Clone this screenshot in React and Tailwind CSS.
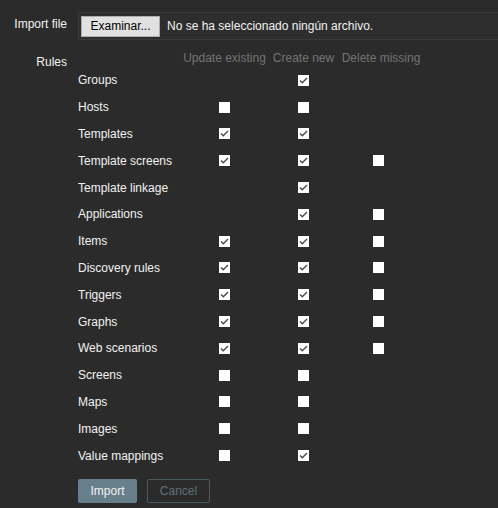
import React from 'react';

const rules = [
  ['Groups', null, true, null],
  ['Hosts', false, false, null],
  ['Templates', true, true, null],
  ['Template screens', true, true, false],
  ['Template linkage', null, true, null],
  ['Applications', null, true, false],
  ['Items', true, true, false],
  ['Discovery rules', true, true, false],
  ['Triggers', true, true, false],
  ['Graphs', true, true, false],
  ['Web scenarios', true, true, false],
  ['Screens', false, false, null],
  ['Maps', false, false, null],
  ['Images', false, false, null],
  ['Value mappings', false, true, null],
];

function Check({ checked }) {
  return (
    <span className="block w-[11px] h-[11px] bg-white">
      {checked && (
        <svg width="11" height="11" viewBox="0 0 11 11">
          <path d="M2 5.5 L4.3 7.8 L9 3" fill="none" stroke="#4b4b4b" strokeWidth="1.4" />
        </svg>
      )}
    </span>
  );
}

export default function App() {
  return (
    <div
      className="w-[498px] h-[508px] bg-[#2b2b2b] text-[#f2f2f2] text-[12px] overflow-hidden"
      style={{ fontFamily: '"Liberation Sans", Arial, sans-serif' }}
    >
      <div className="flex items-center pt-[12px]">
        <div className="w-[67px] text-right leading-[14px] -mt-[5px]">Import file</div>
        <div className="ml-[11px] flex-1 -mr-[4px] h-[28px] flex items-center border border-[#3a3a3a] bg-[#2e2e2e] px-[2px]">
          <div className="h-[21px] w-[79px] flex items-center justify-center bg-[#e1e1e1] border border-[#adadad] text-[#000]">
            Examinar...
          </div>
          <span className="ml-[7px]">No se ha seleccionado ningún archivo.</span>
        </div>
      </div>

      <div className="flex mt-[8px]">
        <div className="w-[67px] text-right leading-[14px] pt-[7px]">Rules</div>
        <div className="ml-[11px]">
          <div className="grid grid-cols-[100px_93px_65px_88px] h-[19px] items-center text-[#737373] leading-[14px]">
            <div />
            <div className="text-center whitespace-nowrap">Update existing</div>
            <div className="text-center whitespace-nowrap">Create new</div>
            <div className="text-center whitespace-nowrap pl-[2px]">Delete missing</div>
          </div>
          {rules.map(([name, a, b, c]) => (
            <div key={name} className="grid grid-cols-[100px_93px_65px_88px] h-[26.8px] items-center">
              <div className="whitespace-nowrap leading-[14px]">{name}</div>
              <div className="flex justify-center">{a !== null && <Check checked={a} />}</div>
              <div className="flex justify-center">{b !== null && <Check checked={b} />}</div>
              <div className="flex justify-center pr-[3px]">{c !== null && <Check checked={c} />}</div>
            </div>
          ))}
          <div className="flex gap-[10px] mt-[10px]">
            <button className="h-[24px] w-[59px] bg-[#687f8c] text-[#f2f2f2] rounded-[2px]">Import</button>
            <button className="h-[24px] w-[63px] border border-[#4e5a61] text-[#5f707a] rounded-[2px]">Cancel</button>
          </div>
        </div>
      </div>
    </div>
  );
}
